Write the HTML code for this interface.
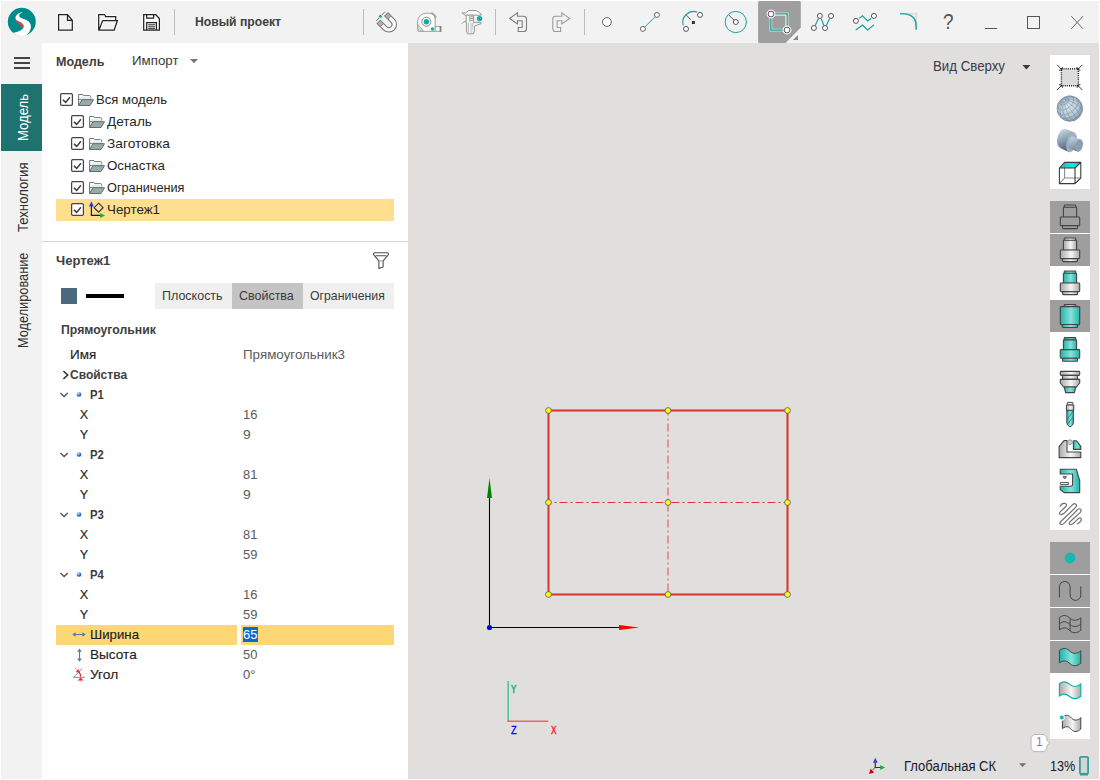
<!DOCTYPE html>
<html lang="ru">
<head>
<meta charset="utf-8">
<title>Новый проект</title>
<style>
html,body{margin:0;padding:0;background:#fff;}
body{width:1100px;height:780px;overflow:hidden;font-family:"Liberation Sans",sans-serif;}
#app{position:relative;width:1100px;height:780px;background:#fff;overflow:hidden;}
#app div{position:absolute;box-sizing:border-box;}
.topbar{left:1px;top:1px;width:1098px;height:42px;background:#f2f2f2;}
.side{left:1px;top:43px;width:41px;height:736px;background:#f2f2f2;}
.panel{left:42px;top:43px;width:366px;height:736px;background:#fff;}
.canvas{left:408px;top:43px;width:691px;height:736px;background:#e0dfdd;}
.sidetab{left:1px;top:84px;width:41px;height:67px;background:#1e7371;}
.sep{width:1px;background:#bdbdbd;top:9px;height:26px;}
.hl{background:#fddf8f;}
.hl2{background:#fdd776;}
.divider{left:42px;top:241px;width:366px;height:1px;background:#d4d4d4;}
.tabs{left:155px;top:283px;width:239px;height:26px;background:#efefef;}
.tabsel{left:232px;top:283px;width:71px;height:26px;background:#c4c4c4;}
.swatch{left:61px;top:288px;width:16px;height:16px;background:#4a697e;}
.lnsample{left:86px;top:294px;width:38px;height:4px;background:#000;}
.selbox{left:243px;top:627px;width:15px;height:15px;background:#0b6bd6;}
.tb{left:1050px;width:40px;background:#fff;}
.tbg{left:1050px;width:40px;height:32px;background:#9e9e9e;}
.ham{left:14px;width:16px;height:2px;background:#444;}
.t{position:absolute;white-space:nowrap;transform-origin:0 0;font-family:"Liberation Sans",sans-serif;}
svg.ov{position:absolute;left:0;top:0;width:1100px;height:780px;overflow:visible;}
.lb{-webkit-text-stroke:0.15px #1e1e1e;}
.st{-webkit-text-stroke:0.3px currentColor;}
#app #labels{left:0;top:0;width:1100px;height:780px;}

</style>
</head>
<body>
<div id="app">
<div class="topbar"></div>
<div class="side"></div>
<div class="panel"></div>
<div class="canvas"></div>
<div class="sidetab"></div>
<div class="ham" style="top:57px"></div>
<div class="ham" style="top:62px"></div>
<div class="ham" style="top:67px"></div>
<div class="sep" style="left:174px"></div>
<div class="sep" style="left:363px"></div>
<div class="sep" style="left:495px"></div>
<div class="sep" style="left:584px"></div>
<div class="hl" style="left:56px;top:199px;width:338px;height:22px"></div>
<div class="divider"></div>
<div class="tabs"></div>
<div class="tabsel"></div>
<div class="swatch"></div>
<div class="lnsample"></div>
<div class="hl2" style="left:56px;top:625px;width:181px;height:20px"></div>
<div class="hl2" style="left:241px;top:625px;width:153px;height:20px"></div>
<div class="selbox"></div>
<div class="tb" style="top:55px;height:134px"></div>
<div class="tb" style="top:201px;height:329px"></div>
<div class="tb" style="top:542px;height:197px"></div>
<div class="tbg" style="top:201px"></div>
<div class="tbg" style="top:234px"></div>
<div class="tbg" style="top:300px"></div>
<div class="tbg" style="top:542px"></div>
<div class="tbg" style="top:575px"></div>
<div class="tbg" style="top:608px"></div>
<div class="tbg" style="top:641px"></div>

<svg class="ov" width="1100" height="780" viewBox="0 0 1100 780">
<defs>
<linearGradient id="gSil" x1="0" y1="0" x2="1" y2="0"><stop offset="0" stop-color="#a9a9a9"/><stop offset="0.55" stop-color="#f6f6f6"/><stop offset="1" stop-color="#a9a9a9"/></linearGradient>
<linearGradient id="gTeal" x1="0" y1="0" x2="1" y2="0"><stop offset="0" stop-color="#22b3aa"/><stop offset="0.55" stop-color="#86e3db"/><stop offset="1" stop-color="#22b3aa"/></linearGradient>
<linearGradient id="gFold" x1="0" y1="0" x2="0" y2="1"><stop offset="0" stop-color="#b9c6c4"/><stop offset="0.35" stop-color="#8fa19e"/><stop offset="1" stop-color="#8a9b98"/></linearGradient>
<radialGradient id="gSph" cx="0.42" cy="0.4" r="0.62"><stop offset="0" stop-color="#dce9f0"/><stop offset="0.65" stop-color="#b6c8d4"/><stop offset="1" stop-color="#8399ab"/></radialGradient>
<linearGradient id="gCyl" x1="0" y1="0" x2="0.35" y2="1"><stop offset="0" stop-color="#e0e8ee"/><stop offset="0.3" stop-color="#aebfcc"/><stop offset="0.75" stop-color="#6d8398"/><stop offset="1" stop-color="#52687e"/></linearGradient>
<radialGradient id="gDot" cx="0.35" cy="0.3" r="0.8"><stop offset="0" stop-color="#cfe6ff"/><stop offset="0.5" stop-color="#3b7fd0"/><stop offset="1" stop-color="#10408c"/></radialGradient>
<linearGradient id="gCyan" x1="0" y1="0" x2="1" y2="0"><stop offset="0" stop-color="#00cfcf"/><stop offset="0.6" stop-color="#00f0ea"/><stop offset="1" stop-color="#00c4c4"/></linearGradient>
<linearGradient id="gCyl2" x1="0" y1="0" x2="0.25" y2="1"><stop offset="0" stop-color="#cdd8e0"/><stop offset="0.5" stop-color="#9fb1bf"/><stop offset="1" stop-color="#71879a"/></linearGradient>
</defs>

<!-- ===== logo ===== -->
<g id="logo">
<clipPath id="cLogo"><circle cx="21.8" cy="21.7" r="14.2"/></clipPath>
<circle cx="21.8" cy="21.7" r="14.2" fill="#fbfbfb"/>
<circle cx="21.8" cy="21.8" r="14" fill="#008b8b"/>
<g clip-path="url(#cLogo)"><g transform="translate(0,-0.6)">
<path d="M23.3,12.7 C20,12.8 16,15 15.5,18.2 C15.3,20.2 16.6,21.2 19.2,22.2 C22.2,23.4 24.2,25.2 23.4,28 C22.6,30.6 18,32.6 13.2,33.4 L15,38 L26,38 L27.3,35 C30,32.4 31.6,28.6 30.6,25.2 C29.6,21.8 26,20.2 22.4,19.1 C19.6,18.2 18.6,16.7 19.5,15.2 C20.3,13.9 21.9,13.2 23.3,12.7 Z" fill="#fff"/>
<path d="M16,20.4 C17.8,22.4 21.4,23.2 23.1,25.3 C24,26.5 23.8,27.6 22.8,28.4 C22.3,26.6 20.2,25.5 18.6,24.6 C17.1,23.8 16.1,22.4 16,20.4 Z" fill="#f0403c"/>
</g></g>
</g>

<!-- ===== top toolbar: file icons ===== -->
<g fill="none" stroke="#fff" stroke-width="2.6" stroke-linejoin="round" opacity="0.9">
<path d="M58.6,14.7 H67.5 L72.3,20.3 V30 H58.6 Z"/>
<path d="M98.7,30 V14.7 H104.6 L105.6,16.6 H115.7 V20.4 M102.7,20.5 H117.4 L114.2,30 H99.4 Z"/>
<path d="M143.7,14.7 H155.8 L159.4,18.5 V30 H143.7 Z"/>
</g>
<g fill="none" stroke="#222" stroke-width="1.25" stroke-linejoin="miter">
<path d="M58.6,14.7 H67.5 L72.3,20.3 V30 H58.6 Z M67.5,14.7 V20.3 H72.3"/>
<path d="M98.7,30 V14.7 H104.6 L105.6,16.6 H115.7 V20.4 M102.7,20.5 H117.4 L114.2,30 H99 L102.7,20.5"/>
<path d="M143.7,14.7 H155.8 L159.4,18.5 V30 H143.7 Z" fill="#fff"/>
<path d="M146.7,14.7 V18.2 H153.6 V14.7 M146.7,30 V22.5 H156.4 V30"/>
<path d="M148.2,24.8 H155 M148.2,26.8 H155 M148.2,28.7 H155" stroke-width="1"/>
</g>

<!-- magnet -->
<g transform="translate(388.9,24.5) rotate(-45)">
<path d="M-7.6,-8.9 H-3.1 V0 A3.1,3.1 0 0 0 3.1,0 V-8.9 H7.6 V0 A7.6,7.6 0 0 1 -7.6,0 Z" fill="#fafafa" stroke="#747474" stroke-width="1"/>
<path d="M-7.6,-8.9 H-3.1 V-4.4 H-7.6 Z M3.1,-8.9 H7.6 V-4.4 H3.1 Z" fill="#b2b2b2" stroke="#747474" stroke-width="0.8"/>
</g>
<path d="M376.2,21 L385,11.6" stroke="#666" stroke-width="0.9" fill="none"/>
<circle cx="380.4" cy="16.4" r="1.9" fill="#12aaa6" stroke="#f2f2f2" stroke-width="0.8"/>

<!-- tape measure -->
<g>
<path d="M430,13.6 L432.6,12.8 L436,16.4 L435.2,18.6 Z" fill="#b4b4b4" stroke="#8e8e8e" stroke-width="0.9"/>
<path d="M419.4,31.4 Q417.6,31.4 417.6,29.6 V21.8 A8.6,8.6 0 0 1 426.2,13.2 H429 Q434.6,13.6 435.2,19 V31.4 Z" fill="#fafafa" stroke="#a2a2a2" stroke-width="1"/>
<path d="M417.9,24.4 L423.4,31 H419.6 Q417.9,31 417.9,29.4 Z" fill="#dedede" stroke="#a2a2a2" stroke-width="0.8"/>
<path d="M435.2,26.6 H440.6 V31.3 H435.2 Z" fill="#fff" stroke="#9a9a9a" stroke-width="1"/>
<path d="M440.5,26 V31.9" stroke="#858585" stroke-width="1.8"/>
<circle cx="426.4" cy="21.7" r="4.5" fill="#fff" stroke="#7c7c7c" stroke-width="0.9"/>
<circle cx="426.4" cy="21.7" r="2.7" fill="#12aaa6"/>
<circle cx="432.4" cy="29" r="1.7" fill="#12aaa6"/>
</g>

<!-- caliper -->
<g fill="#fbfbfb" stroke="#969696" stroke-width="1" stroke-linejoin="round">
<path d="M461.9,12.9 H465.8 L468.6,10.5 H476.3 L481.2,14 V15.2 H465.2 Z"/>
<path d="M466.2,15.2 H473.6 V23 H473 V31 L471.8,33.8 H467.4 L466.6,31 V23 H466.2 Z"/>
<path d="M461.9,23.8 L464,21.7 H466.2" fill="none"/>
<path d="M473.6,22.4 H481 V23.6 L474.4,26.2 V31 L473.4,33.8 H471.8" fill="#f4f4f4"/>
<path d="M468.4,22.6 V32.6 M471,22.6 V32.6" stroke="#b8b8b8" fill="none"/>
<path d="M470,16.9 H473.2 M470,18.6 H473.2 M470,20.3 H473.2" stroke="#8c8c8c" stroke-width="0.9" fill="none"/>
<path d="M469.6,15.6 V22" stroke="#b8b8b8" fill="none"/>
</g>
<circle cx="479.6" cy="18.6" r="2.7" fill="#12aaa6"/>

<!-- undo / redo -->
<path d="M509.6,18.4 L517.5,12.9 V16.2 H523.6 Q526.5,16.2 526.5,19.4 V28.4 Q526.5,31.5 523.6,31.5 H518.2 V27.5 H522.2 V20.8 H517.5 V23.9 Z" fill="none" stroke="#7c7c7c" stroke-width="1.1" stroke-linejoin="miter"/>
<path d="M569.7,18.4 L561.8,12.9 V16.2 H555.7 Q552.8,16.2 552.8,19.4 V28.4 Q552.8,31.5 555.7,31.5 H560.6 V27.5 H557.1 V20.8 H561.8 V23.9 Z" fill="none" stroke="#9c9c9c" stroke-width="1.1" stroke-linejoin="miter"/>

<!-- point -->
<circle cx="606.9" cy="22" r="4.4" fill="#fff" stroke="#666" stroke-width="1"/>
<!-- line -->
<path d="M645,26.8 L654.8,17" stroke="#16a39f" stroke-width="1" fill="none"/>
<circle cx="642.9" cy="28.9" r="2.5" fill="#fff" stroke="#666" stroke-width="1"/>
<circle cx="656.9" cy="14.9" r="2.5" fill="#fff" stroke="#666" stroke-width="1"/>
<!-- arc -->
<path d="M683.2,25.4 A11,11 0 0 1 697.2,12" stroke="#12a19d" stroke-width="1.1" fill="none"/>
<path d="M686.2,15 L690.8,19.6" stroke="#444" stroke-width="0.9" fill="none"/>
<rect x="691.9" y="21" width="3" height="3" fill="#333"/>
<circle cx="686" cy="28.9" r="2.5" fill="#fff" stroke="#555" stroke-width="1"/>
<circle cx="700" cy="14.9" r="2.5" fill="#fff" stroke="#555" stroke-width="1"/>
<!-- circle -->
<circle cx="735.8" cy="22" r="10.6" fill="none" stroke="#16a39f" stroke-width="1"/>
<path d="M728.8,15 L733.8,20" stroke="#444" stroke-width="0.9" fill="none"/>
<circle cx="735.8" cy="22" r="2.5" fill="#fff" stroke="#555" stroke-width="1"/>

<!-- rectangle (selected) -->
<path d="M759.6,1 H799.3 Q800.8,1 800.8,2.5 V27.6 L785.6,43 H759.6 Q758.1,43 758.1,41.5 V2.5 Q758.1,1 759.6,1 Z" fill="#9e9e9e"/>
<path d="M798,35 V40 H793 Z" fill="#8a8a8a"/>
<rect x="770.9" y="13.9" width="16.2" height="16.2" fill="none" stroke="#f4eaea" stroke-width="2.6"/>
<rect x="770.9" y="13.9" width="16.2" height="16.2" fill="none" stroke="#0e9c98" stroke-width="1.3"/>
<path d="M772.2,15.2 H785.8 V28.8" fill="none" stroke="#f6eeee" stroke-width="0.8"/>
<circle cx="771" cy="14" r="3.6" fill="#fff" stroke="#fff" stroke-width="1.6"/>
<circle cx="771" cy="14" r="2.9" fill="#fff" stroke="#555" stroke-width="1"/>
<circle cx="787" cy="30" r="3.6" fill="#fff" stroke="#fff" stroke-width="1.6"/>
<circle cx="787" cy="30" r="2.9" fill="#fff" stroke="#555" stroke-width="1"/>

<!-- polyline -->
<path d="M815.2,25.4 L818.4,18.6 M821.2,18.6 L823.8,25.2 M826.4,25.4 L829.6,18.6" stroke="#12a19d" stroke-width="1.15" fill="none"/>
<g fill="#fff" stroke="#555" stroke-width="1">
<circle cx="813.9" cy="28" r="2.5"/><circle cx="819.9" cy="15.9" r="2.5"/><circle cx="825" cy="28" r="2.5"/><circle cx="831" cy="15.9" r="2.5"/>
</g>
<!-- curves -->
<path d="M859.2,18.4 L862.5,15.7 L867.6,21 L871.2,18.4 M855.8,30 L862.5,25.1 L867.6,29.9 L874,24.9" stroke="#12a19d" stroke-width="1.2" fill="none" stroke-linejoin="miter"/>
<circle cx="855.9" cy="20.9" r="2.5" fill="#fff" stroke="#555" stroke-width="1"/>
<circle cx="873.9" cy="15.9" r="2.5" fill="#fff" stroke="#555" stroke-width="1"/>
<!-- fillet -->
<path d="M905,13.8 H917.4 M916.1,12.4 V25" stroke="#dadada" stroke-width="1.6" fill="none"/>
<path d="M900,13.8 H903.6 Q916.1,14.6 916.1,26 V29.8" stroke="#2aa9a4" stroke-width="1.6" fill="none"/>

<!-- window controls -->
<path d="M985,28.5 H997.2" stroke="#555" stroke-width="1" fill="none"/>
<rect x="1027.5" y="16.5" width="12" height="12" fill="none" stroke="#555" stroke-width="1"/>
<path d="M1071.3,16.2 L1083,28.8 M1083,16.2 L1071.3,28.8" stroke="#666" stroke-width="1" fill="none"/>

<!-- dropdown arrows -->
<path d="M190,59 H198 L194,63.2 Z" fill="#777"/>
<path d="M1022.4,65 H1030.4 L1026.4,69.4 Z" fill="#3a3a3a"/>
<path d="M1019,763.2 H1026.2 L1022.6,766.9 Z" fill="#707070"/>
<!-- ===== tree icons ===== -->
<rect x="60.6" y="93.6" width="11.8" height="11.8" rx="1.3" fill="#fff" stroke="#454545" stroke-width="1.25"/><path d="M63.0,99.9 l2.7,2.5 l4.2,-5.2" fill="none" stroke="#3c3c3c" stroke-width="1.45"/><path d="M78.6,105.6 V94.5 H82.9 L83.5,95.6 H89.6 Q90.7,95.6 90.7,96.8 V99.4 H78.6 Z" fill="#fdfefe" stroke="#6a7a7d" stroke-width="1"/><path d="M80.4,97.2 H90.6 V99.4 H80.4 Z" fill="#e3e9e9"/><path d="M81.9,99.7 H93.5 L90.0,105.5 H78.7 Z" fill="#9aaaa8" stroke="#5f7073" stroke-width="1" stroke-linejoin="round"/>
<rect x="71.6" y="115.6" width="11.8" height="11.8" rx="1.3" fill="#fff" stroke="#454545" stroke-width="1.25"/><path d="M74.0,121.9 l2.7,2.5 l4.2,-5.2" fill="none" stroke="#3c3c3c" stroke-width="1.45"/><path d="M89.6,127.6 V116.5 H93.9 L94.5,117.6 H100.6 Q101.7,117.6 101.7,118.8 V121.4 H89.6 Z" fill="#fdfefe" stroke="#6a7a7d" stroke-width="1"/><path d="M91.4,119.2 H101.6 V121.4 H91.4 Z" fill="#e3e9e9"/><path d="M92.9,121.7 H104.5 L101.0,127.5 H89.7 Z" fill="#9aaaa8" stroke="#5f7073" stroke-width="1" stroke-linejoin="round"/>
<rect x="71.6" y="137.6" width="11.8" height="11.8" rx="1.3" fill="#fff" stroke="#454545" stroke-width="1.25"/><path d="M74.0,143.9 l2.7,2.5 l4.2,-5.2" fill="none" stroke="#3c3c3c" stroke-width="1.45"/><path d="M89.6,149.6 V138.5 H93.9 L94.5,139.6 H100.6 Q101.7,139.6 101.7,140.8 V143.4 H89.6 Z" fill="#fdfefe" stroke="#6a7a7d" stroke-width="1"/><path d="M91.4,141.2 H101.6 V143.4 H91.4 Z" fill="#e3e9e9"/><path d="M92.9,143.7 H104.5 L101.0,149.5 H89.7 Z" fill="#9aaaa8" stroke="#5f7073" stroke-width="1" stroke-linejoin="round"/>
<rect x="71.6" y="159.6" width="11.8" height="11.8" rx="1.3" fill="#fff" stroke="#454545" stroke-width="1.25"/><path d="M74.0,165.9 l2.7,2.5 l4.2,-5.2" fill="none" stroke="#3c3c3c" stroke-width="1.45"/><path d="M89.6,171.6 V160.5 H93.9 L94.5,161.6 H100.6 Q101.7,161.6 101.7,162.8 V165.4 H89.6 Z" fill="#fdfefe" stroke="#6a7a7d" stroke-width="1"/><path d="M91.4,163.2 H101.6 V165.4 H91.4 Z" fill="#e3e9e9"/><path d="M92.9,165.7 H104.5 L101.0,171.5 H89.7 Z" fill="#9aaaa8" stroke="#5f7073" stroke-width="1" stroke-linejoin="round"/>
<rect x="71.6" y="181.6" width="11.8" height="11.8" rx="1.3" fill="#fff" stroke="#454545" stroke-width="1.25"/><path d="M74.0,187.9 l2.7,2.5 l4.2,-5.2" fill="none" stroke="#3c3c3c" stroke-width="1.45"/><path d="M89.6,193.6 V182.5 H93.9 L94.5,183.6 H100.6 Q101.7,183.6 101.7,184.8 V187.4 H89.6 Z" fill="#fdfefe" stroke="#6a7a7d" stroke-width="1"/><path d="M91.4,185.2 H101.6 V187.4 H91.4 Z" fill="#e3e9e9"/><path d="M92.9,187.7 H104.5 L101.0,193.5 H89.7 Z" fill="#9aaaa8" stroke="#5f7073" stroke-width="1" stroke-linejoin="round"/>
<rect x="71.6" y="203.6" width="11.8" height="11.8" rx="1.3" fill="#fff" stroke="#454545" stroke-width="1.25"/><path d="M74.0,209.9 l2.7,2.5 l4.2,-5.2" fill="none" stroke="#3c3c3c" stroke-width="1.45"/>
<path d="M91.4,204.4 V215.4 H100.6" stroke="#1c1c1c" stroke-width="1.2" fill="none"/><path d="M91.4,201.6 l2.5,5 h-5 z" fill="#2a2ff0"/><path d="M105.2,215.4 l-5,2.5 v-5 z" fill="#20b040"/><path d="M98.6,203.2 l4.5,4.5 l-4.5,4.5 l-4.5,-4.5 z" fill="none" stroke="#2c2c40" stroke-width="1.1"/>
<path d="M375,252.7 H387 Q388.7,252.8 388.4,254.3 Q388.2,255 387.4,255.9 L383.1,260.9 V266.9 L378.9,268.6 V260.9 L374.6,255.9 Q373.2,254.3 373.6,253.5 Q374,252.7 375,252.7 Z M375.6,255.7 H386.4" fill="none" stroke="#4e4e4e" stroke-width="1.1" stroke-linejoin="round"/><path d="M378.9,260.9 H383.1" fill="none" stroke="#9a9a9a" stroke-width="1"/>
<path d="M63.4,371 L67.6,375 L63.4,379" fill="none" stroke="#383838" stroke-width="1.7"/>
<path d="M60.4,392.9 l3.7,3.7 l3.7,-3.7" fill="none" stroke="#555" stroke-width="1.4"/>
<circle cx="79" cy="394.5" r="2.35" fill="url(#gDot)"/>
<path d="M60.4,452.9 l3.7,3.7 l3.7,-3.7" fill="none" stroke="#555" stroke-width="1.4"/>
<circle cx="79" cy="454.5" r="2.35" fill="url(#gDot)"/>
<path d="M60.4,512.9 l3.7,3.7 l3.7,-3.7" fill="none" stroke="#555" stroke-width="1.4"/>
<circle cx="79" cy="514.5" r="2.35" fill="url(#gDot)"/>
<path d="M60.4,572.9 l3.7,3.7 l3.7,-3.7" fill="none" stroke="#555" stroke-width="1.4"/>
<circle cx="79" cy="574.5" r="2.35" fill="url(#gDot)"/>
<path d="M74.6,634.5 H83.4" fill="none" stroke="#4a7f94" stroke-width="1.1"/><path d="M72.3,634.5 l3.2,-2.3 v4.6 z M85.7,634.5 l-3.2,-2.3 v4.6 z" fill="#4a7f94"/>
<path d="M79.5,650.8 V659.4" fill="none" stroke="#4a7f94" stroke-width="1.1"/><path d="M79.5,648.5 l-2.3,3.2 h4.6 z M79.5,661.7 l-2.3,-3.2 h4.6 z" fill="#4a7f94"/>
<path d="M73.2,677.3 H84.8 M73.6,677.2 L82,668.8" fill="none" stroke="#6f929e" stroke-width="1"/>
<path d="M75.4,668.4 L77.4,670.2" fill="none" stroke="#f0202c" stroke-width="1" stroke-dasharray="1.2 0.8"/>
<path d="M78.6,671.4 Q80.4,673.6 80.6,676.6" fill="none" stroke="#f0202c" stroke-width="1.1"/>
<path d="M79.4,672.4 l-3,-0.6 l1.8,-2.4 z M80.6,677.8 l2.2,2.6 l-2.2,-0.6 l-2.2,0.6 z M80.6,679 v2.4" fill="#f0202c" stroke="#f0202c" stroke-width="0.6"/>
<!-- ===== canvas drawing ===== -->
<rect x="548.5" y="410.5" width="239" height="184" fill="none" stroke="#dc3a30" stroke-width="2.1"/>
<path d="M548.5,502.5 H787.5" stroke="#e0342c" stroke-width="1" stroke-dasharray="8 3 2 3" stroke-dashoffset="5" fill="none"/>
<path d="M668,410.5 V594.5" stroke="#e0342c" stroke-width="1.1" stroke-dasharray="8 3 2 3" stroke-dashoffset="3" opacity="0.75" fill="none"/>
<circle cx="548.5" cy="410.5" r="2.9" fill="#ffff00" stroke="#3a3a8a" stroke-width="0.7"/>
<circle cx="548.5" cy="502.5" r="2.9" fill="#ffff00" stroke="#3a3a8a" stroke-width="0.7"/>
<circle cx="548.5" cy="594.5" r="2.9" fill="#ffff00" stroke="#3a3a8a" stroke-width="0.7"/>
<circle cx="668.0" cy="410.5" r="2.9" fill="#ffff00" stroke="#3a3a8a" stroke-width="0.7"/>
<circle cx="668.0" cy="502.5" r="2.9" fill="#ffff00" stroke="#3a3a8a" stroke-width="0.7"/>
<circle cx="668.0" cy="594.5" r="2.9" fill="#ffff00" stroke="#3a3a8a" stroke-width="0.7"/>
<circle cx="787.5" cy="410.5" r="2.9" fill="#ffff00" stroke="#3a3a8a" stroke-width="0.7"/>
<circle cx="787.5" cy="502.5" r="2.9" fill="#ffff00" stroke="#3a3a8a" stroke-width="0.7"/>
<circle cx="787.5" cy="594.5" r="2.9" fill="#ffff00" stroke="#3a3a8a" stroke-width="0.7"/>
<path d="M489.5,497 V627.5 H620" stroke="#000" stroke-width="1.1" fill="none"/>
<path d="M489.5,477.8 L492,498 H487 Z" fill="#008000"/>
<path d="M639.2,627.5 L619,630 V625 Z" fill="#ff0000"/>
<circle cx="489.5" cy="627.5" r="2.6" fill="#0000ff"/>
<path d="M508.2,681 V721.4" stroke="#5cc28e" stroke-width="1.6" fill="none"/>
<path d="M507.6,721.2 H548.2" stroke="#ee6464" stroke-width="1.6" fill="none"/>
<path d="M875.3,762 V767.5 H881" stroke="#333" stroke-width="1.2" fill="none"/><path d="M875.3,767.5 L872.8,770" stroke="#333" stroke-width="1.1" stroke-dasharray="1 0.6" fill="none"/><path d="M875.3,757.8 l2.4,5 h-4.8 z" fill="#3a40d8"/><path d="M885.2,767.5 l-5,2.4 v-4.8 z" fill="#1cb040"/><path d="M869,774 l1.6,-5.2 l3.6,3.6 z" fill="#c00010"/>
<rect x="1079.9" y="756.9" width="8.2" height="17" rx="1.2" fill="#cdd8d6" stroke="#3a9c98" stroke-width="1.8"/><path d="M1080,774.2 H1088" stroke="#3a9c98" stroke-width="2.6"/>
<path d="M1034,734.5 H1044 L1046.8,737.3 V740.4 L1049.8,743 L1046.8,745.8 V748.8 L1044,751.6 H1034 L1031.1,748.8 V737.3 Z" fill="#fff" stroke="#b0b0b0" stroke-width="0.9" stroke-linejoin="round"/>
<!-- ===== right toolbar ===== -->
<rect x="1061.4" y="68.8" width="17" height="17" fill="#dcdcdc"/><rect x="1061.4" y="68.8" width="17" height="17" fill="none" stroke="#222" stroke-width="1.5" stroke-dasharray="1 1.12"/><path d="M1057,64.8 L1061.6,69.4 M1082.4,64.8 L1077.8,69.4 M1057,90 L1061.6,85.4 M1082.4,90 L1077.8,85.4" stroke="#222" stroke-width="0.9" fill="none"/><path d="M1062.4,67 L1061.8,69.8 L1059,70.2 M1077,67 L1077.6,69.8 L1080.4,70.2 M1062.4,87.8 L1061.8,85 L1059,84.6 M1077,87.8 L1077.6,85 L1080.4,84.6" stroke="#222" stroke-width="0.9" fill="none"/>
<circle cx="1069.8" cy="108.6" r="12.7" fill="url(#gSph)" stroke="#8096a8" stroke-width="0.7"/>
<path d="M1060.5,104.0 L1060.3,103.8 L1060.2,103.5 L1060.1,103.1 L1060.1,102.8 L1060.1,102.4 L1060.2,102.0 L1060.3,101.7 L1060.5,101.3 L1060.7,100.9 L1060.9,100.5 L1061.2,100.1 L1061.5,99.7 L1061.9,99.4 L1062.2,99.0 L1062.6,98.7 L1063.1,98.4 L1063.5,98.2 L1063.9,98.0 L1064.4,97.8 L1064.9,97.6 L1065.3,97.5 L1065.7,97.5 L1066.2,97.4 L1066.6,97.4 L1066.9,97.5 L1067.3,97.6 L1067.6,97.7 L1067.9,97.9 L1068.2,98.1 L1068.4,98.3 L1068.5,98.6 L1068.6,98.9 L1068.7,99.2 L1068.7,99.6 L1068.7,99.9 L1068.7,100.3 L1068.5,100.7 L1068.4,101.1 L1068.2,101.5 L1067.9,101.9 L1067.7,102.3 L1067.3,102.6 L1067.0,103.0 L1066.6,103.3 L1066.2,103.7 L1065.8,103.9 L1065.4,104.2 L1064.9,104.4 L1064.5,104.6 L1064.0,104.7 L1063.6,104.9 L1063.1,104.9 L1062.7,105.0 L1062.3,104.9 L1061.9,104.9 L1061.6,104.8 L1061.2,104.7 L1061.0,104.5 L1060.7,104.3 L1060.5,104.0 M1058.4,108.2 L1058.1,107.7 L1057.9,107.1 L1057.8,106.5 L1057.7,105.9 L1057.7,105.2 L1057.9,104.5 L1058.1,103.8 L1058.4,103.1 M1068.1,96.0 L1068.9,96.0 L1069.6,96.0 L1070.3,96.1 L1071.0,96.3 L1071.6,96.5 L1072.1,96.8 L1072.6,97.2 L1073.0,97.7 L1073.3,98.2 L1073.5,98.7 L1073.6,99.3 L1073.7,100.0 L1073.6,100.6 L1073.5,101.3 L1073.3,102.1 L1073.0,102.8 L1072.6,103.5 L1072.2,104.2 L1071.7,104.9 L1071.1,105.6 L1070.4,106.3 L1069.7,106.9 L1069.0,107.5 L1068.2,108.0 L1067.4,108.5 L1066.6,108.9 L1065.7,109.2 L1064.9,109.5 L1064.1,109.7 L1063.3,109.8 L1062.5,109.9 L1061.7,109.9 L1061.0,109.8 L1060.4,109.6 L1059.8,109.3 L1059.3,109.0 L1058.8,108.6 L1058.4,108.2 M1058.1,112.4 L1057.7,111.8 L1057.4,111.0 M1076.0,97.6 L1076.6,98.1 L1077.1,98.6 L1077.5,99.3 L1077.8,100.0 L1077.9,100.8 L1078.0,101.7 L1078.0,102.5 L1077.8,103.5 L1077.5,104.4 L1077.1,105.3 L1076.6,106.3 L1076.1,107.2 L1075.4,108.2 L1074.6,109.1 L1073.8,109.9 L1072.9,110.7 L1071.9,111.5 L1070.9,112.2 L1069.8,112.8 L1068.7,113.3 L1067.6,113.8 L1066.6,114.1 L1065.5,114.4 L1064.4,114.6 L1063.4,114.6 L1062.4,114.6 L1061.5,114.5 L1060.6,114.2 L1059.9,113.9 L1059.2,113.5 L1058.6,113.0 L1058.1,112.4 M1080.5,101.9 L1080.8,102.6 L1081.0,103.5 L1081.1,104.4 L1081.0,105.4 L1080.9,106.4 L1080.6,107.4 L1080.1,108.4 L1079.6,109.4 L1079.0,110.4 L1078.2,111.4 L1077.4,112.4 L1076.5,113.3 L1075.5,114.2 L1074.5,115.0 L1073.4,115.8 L1072.2,116.4 L1071.1,117.0 L1069.9,117.5 L1068.7,117.9 L1067.5,118.2 L1066.4,118.4 L1065.3,118.4 L1064.2,118.4 L1063.2,118.3 L1062.3,118.0 L1061.5,117.7 L1060.7,117.2 L1060.1,116.7 M1082.5,107.8 L1082.4,108.7 L1082.2,109.6 L1082.0,110.5 L1081.6,111.5 L1081.1,112.4 L1080.5,113.4 L1079.8,114.3 L1079.1,115.2 L1078.2,116.1 L1077.3,116.9 L1076.3,117.6 L1075.3,118.3 L1074.3,118.9 L1073.2,119.5 L1072.1,119.9 L1071.0,120.3 L1069.9,120.5 L1068.9,120.7 L1067.8,120.8 L1066.9,120.7 L1066.0,120.6 L1065.1,120.4 M1080.4,115.6 L1079.9,116.3 L1079.3,117.0 L1078.6,117.6 L1077.9,118.2 L1077.2,118.8 L1076.4,119.3 L1075.6,119.8 L1074.8,120.2 L1074.0,120.6 L1073.1,120.8 M1062.9,101.4 L1062.1,102.1 L1061.4,102.9 L1060.7,103.8 L1060.1,104.7 L1059.5,105.6 L1059.1,106.5 L1058.7,107.4 L1058.4,108.4 L1058.1,109.3 L1058.0,110.3 L1058.0,111.2 L1058.0,112.1 L1058.2,113.0 L1058.4,113.9 L1058.7,114.7 L1059.1,115.5 M1062.8,101.1 L1061.9,101.6 L1061.1,102.1 L1060.3,102.7 L1059.6,103.3 L1059.0,104.0 L1058.5,104.7 L1058.0,105.4 L1057.6,106.2 L1057.4,107.0 L1057.2,107.8 L1057.1,108.6 M1062.9,100.7 L1062.1,100.9 L1061.3,101.1 L1060.6,101.4 L1059.9,101.7 L1059.4,102.1 L1058.9,102.5 L1058.5,103.0 L1058.2,103.5 M1063.2,100.3 L1062.5,100.1 L1061.9,100.0 L1061.4,100.0 L1061.0,100.0 L1060.6,100.1 L1060.3,100.3 M1063.5,99.9 L1063.2,99.5 L1062.9,99.1 L1062.7,98.8 L1062.5,98.6 L1062.4,98.4 L1062.4,98.3 M1064.0,99.7 L1064.0,99.0 L1064.1,98.5 L1064.2,98.0 L1064.4,97.5 L1064.6,97.2 L1064.9,96.9 M1064.4,99.6 L1064.9,98.9 L1065.3,98.2 L1065.8,97.6 L1066.3,97.1 L1066.9,96.7 L1067.4,96.3 L1068.0,96.1 L1068.6,96.0 M1064.8,99.6 L1065.6,98.9 L1066.3,98.3 L1067.1,97.8 L1068.0,97.3 L1068.8,96.9 L1069.6,96.6 L1070.5,96.4 L1071.3,96.3 L1072.1,96.3 L1072.9,96.4 L1073.7,96.5 M1065.1,99.8 L1066.1,99.3 L1067.0,98.8 L1068.1,98.4 L1069.1,98.1 L1070.1,97.9 L1071.1,97.7 L1072.2,97.7 L1073.2,97.7 L1074.1,97.8 L1075.1,97.9 L1076.0,98.2 L1076.8,98.5 L1077.6,98.9 L1078.4,99.4 L1079.0,100.0 L1079.7,100.6 M1065.2,100.2 L1066.2,99.9 L1067.3,99.7 L1068.4,99.5 L1069.5,99.5 L1070.6,99.4 L1071.7,99.5 L1072.8,99.6 L1073.9,99.8 L1074.9,100.1 L1075.9,100.4 L1076.9,100.8 L1077.7,101.3 L1078.6,101.8 L1079.3,102.4 L1080.0,103.0 L1080.7,103.6 L1081.2,104.3 L1081.6,105.0 L1082.0,105.8 L1082.3,106.6 L1082.4,107.3 M1065.1,100.5 L1066.1,100.6 L1067.1,100.7 L1068.2,100.9 L1069.2,101.1 L1070.3,101.4 L1071.3,101.7 L1072.3,102.1 L1073.4,102.5 L1074.4,103.0 L1075.3,103.5 L1076.2,104.1 L1077.1,104.7 L1077.9,105.3 L1078.6,106.0 L1079.3,106.6 L1079.9,107.3 L1080.5,108.0 L1080.9,108.7 L1081.3,109.4 L1081.6,110.1 L1081.8,110.8 L1081.8,111.5 L1081.9,112.1 L1081.8,112.7 M1064.9,100.9 L1065.7,101.3 L1066.5,101.7 L1067.3,102.2 L1068.2,102.7 L1069.1,103.3 L1069.9,103.9 L1070.8,104.6 L1071.7,105.3 L1072.5,106.0 L1073.4,106.7 L1074.2,107.4 L1075.0,108.2 L1075.7,108.9 L1076.4,109.7 L1077.0,110.4 L1077.6,111.1 L1078.1,111.8 L1078.6,112.5 L1079.0,113.2 L1079.3,113.8 L1079.6,114.4 L1079.8,114.9 L1079.9,115.4 L1079.9,115.8 L1079.8,116.2 L1079.7,116.5 M1064.5,101.3 L1065.0,102.0 L1065.5,102.7 L1066.0,103.4 L1066.6,104.2 L1067.2,105.0 L1067.8,105.9 L1068.5,106.8 L1069.1,107.7 L1069.8,108.6 L1070.4,109.4 L1071.1,110.3 L1071.7,111.2 L1072.3,112.1 L1072.9,112.9 L1073.5,113.7 L1074.0,114.5 L1074.6,115.2 L1075.0,115.8 L1075.5,116.4 L1075.9,117.0 L1076.2,117.5 L1076.5,117.9 L1076.8,118.2 L1077.0,118.5 L1077.1,118.7 L1077.2,118.8 M1064.1,101.5 L1064.2,102.4 L1064.3,103.3 L1064.5,104.3 L1064.7,105.2 L1065.0,106.3 L1065.3,107.3 L1065.7,108.3 L1066.0,109.4 L1066.4,110.4 L1066.9,111.4 L1067.3,112.4 L1067.8,113.4 L1068.3,114.3 L1068.8,115.2 L1069.3,116.0 L1069.8,116.8 L1070.3,117.5 L1070.8,118.2 L1071.3,118.8 L1071.8,119.3 L1072.2,119.7 L1072.7,120.0 L1073.1,120.3 L1073.5,120.4 L1073.9,120.5 L1074.2,120.5 M1063.6,101.6 L1063.3,102.6 L1063.1,103.6 L1062.9,104.6 L1062.8,105.7 L1062.8,106.8 L1062.8,107.9 L1062.8,109.0 L1062.9,110.1 L1063.1,111.2 L1063.3,112.3 L1063.5,113.3 L1063.8,114.3 L1064.1,115.3 L1064.5,116.2 L1065.0,117.0 L1065.4,117.8 L1065.9,118.6 L1066.5,119.2 L1067.0,119.8 L1067.6,120.3 L1068.2,120.6 L1068.8,120.9 L1069.4,121.1 L1070.0,121.3 M1063.2,101.6 L1062.6,102.5 L1062.1,103.5 L1061.6,104.5 L1061.2,105.5 L1060.8,106.5 L1060.6,107.6 L1060.4,108.7 L1060.2,109.8 L1060.1,110.8 L1060.2,111.9 L1060.2,112.9 L1060.4,113.9 L1060.6,114.8 L1060.9,115.7 L1061.3,116.6 L1061.7,117.4 L1062.2,118.1 L1062.7,118.7 L1063.3,119.3 L1064.0,119.8 L1064.7,120.2 " fill="none" stroke="#6b8498" stroke-width="0.65" opacity="0.8"/>
<g stroke="none"><path d="M1063.4,129 Q1065.4,128.4 1067.4,129.4 L1074.4,132.6 L1069.4,152.2 L1061,148.6 Q1056.2,145.6 1057.2,138.4 Q1058.6,131 1063.4,129 Z" fill="url(#gCyl)"/><ellipse cx="1071.6" cy="142.3" rx="5" ry="10.2" transform="rotate(14 1071.6 142.3)" fill="#a0b2c1"/><path d="M1071.2,136.4 L1080.4,139.2 L1078,151.8 L1068.8,148.6 Q1067.4,142 1071.2,136.4 Z" fill="url(#gCyl2)"/><ellipse cx="1079.2" cy="145.5" rx="3.6" ry="6.3" transform="rotate(14 1079.2 145.5)" fill="#8a9eb0"/></g>
<path d="M1064.6,162.4 H1080.8 L1075,168 H1059.4 Z" fill="url(#gCyan)"/><path d="M1064.6,162.4 V178 H1080.8 M1064.6,178 L1059.4,183.6" fill="none" stroke="#8a8a8a" stroke-width="1.1"/><path d="M1059.4,168 H1075 V183.6 H1059.4 Z M1059.4,168 L1064.6,162.4 H1080.8 V178 L1075,183.6 M1075,168 L1080.8,162.4" fill="none" stroke="#3c3c3c" stroke-width="1.1" stroke-linejoin="round"/>
<g stroke="#444" stroke-width="1.1" stroke-linejoin="round"><rect x="1064.2" y="205.0" width="11.6" height="2.6" rx="0.8" fill="#9e9e9e"/><rect x="1063.4" y="207.3" width="13.2" height="10" rx="0.8" fill="#9e9e9e"/><rect x="1060.3" y="217.0" width="19.4" height="8.6" rx="0.8" fill="#9e9e9e"/><rect x="1062.5" y="225.6" width="15" height="3" rx="0.8" fill="#9e9e9e"/></g>
<g stroke="#444" stroke-width="1.1" stroke-linejoin="round"><rect x="1064.2" y="238.0" width="11.6" height="2.6" rx="0.8" fill="url(#gSil)"/><rect x="1063.4" y="240.3" width="13.2" height="10" rx="0.8" fill="url(#gSil)"/><rect x="1060.3" y="250.0" width="19.4" height="8.6" rx="0.8" fill="url(#gSil)"/><rect x="1062.5" y="258.6" width="15" height="3" rx="0.8" fill="url(#gSil)"/></g>
<g stroke="#444" stroke-width="1.1" stroke-linejoin="round"><rect x="1064.2" y="271.0" width="11.6" height="2.6" rx="0.8" fill="url(#gTeal)"/><rect x="1063.4" y="273.3" width="13.2" height="10" rx="0.8" fill="url(#gTeal)"/><rect x="1060.3" y="283.0" width="19.4" height="8.6" rx="0.8" fill="url(#gSil)"/><rect x="1062.5" y="291.6" width="15" height="3" rx="0.8" fill="url(#gSil)"/></g>
<g stroke="#444" stroke-width="1.1" stroke-linejoin="round"><rect x="1064.2" y="304.5" width="11.6" height="2.4" rx="0.8" fill="url(#gTeal)"/><rect x="1060.3" y="306.6" width="19.4" height="18" rx="0.8" fill="url(#gTeal)"/><rect x="1062.5" y="324.5" width="15" height="3" rx="0.8" fill="url(#gTeal)"/></g>
<g stroke="#444" stroke-width="1.1" stroke-linejoin="round"><rect x="1064.2" y="337.6" width="11.6" height="2.6" rx="0.8" fill="url(#gTeal)"/><rect x="1063.4" y="339.9" width="13.2" height="10" rx="0.8" fill="url(#gTeal)"/><rect x="1060.3" y="349.6" width="19.4" height="8.6" rx="0.8" fill="url(#gTeal)"/><rect x="1062.5" y="358.2" width="15" height="3" rx="0.8" fill="url(#gTeal)"/></g>
<g stroke="#444" stroke-width="1.1" stroke-linejoin="round"><rect x="1060.3" y="371.4" width="19.4" height="4" rx="0.8" fill="url(#gSil)"/><rect x="1062.5" y="375.4" width="15" height="4" fill="url(#gSil)"/><path d="M1060.3,379.4 H1079.7 V383 L1076.4,387 H1063.6 L1060.3,383 Z" fill="url(#gSil)"/><path d="M1064.2,387 H1075.8 L1074.4,392.6 H1065.6 Z" fill="url(#gTeal)"/></g>
<g stroke="#444" stroke-width="1" stroke-linejoin="round"><rect x="1067.3" y="402.4" width="5.6" height="2.6" rx="0.6" fill="#f4f4f4"/><path d="M1066.4,405 H1073.8 V410.4 H1066.4 Z" fill="url(#gSil)"/><path d="M1066.8,410.4 H1073.4 V420 Q1073.8,423 1072.6,425 L1070.1,427 L1067.6,425 Q1066.4,423 1066.8,420 Z" fill="url(#gTeal)"/><path d="M1073.2,411 L1067,419.6 M1073.4,416.4 L1067.4,424.4 M1067,412.6 L1068.6,410.6" fill="none" stroke="#2a7e7a" stroke-width="0.9"/></g>
<g stroke="#444" stroke-width="1.1" stroke-linejoin="round"><path d="M1064,440.6 H1067 V452 H1080.8 V457.6 H1059.1 V446.6 Z" fill="url(#gSil)"/><path d="M1073.4,440.8 H1076.4 L1080.8,446.4 V449.4 H1073.4 Z" fill="url(#gTeal)"/><circle cx="1070" cy="442.2" r="2.4" fill="#cfcfcf" stroke="#8a8a8a" stroke-width="0.8"/></g>
<g stroke="#444" stroke-width="1.1" stroke-linejoin="round"><path d="M1060.2,469.3 H1076.4 L1079.7,480.6 V492.6 H1064 L1060.2,489.6 V486.2 H1071.6 L1072.6,485 V474 H1060.2 Z" fill="url(#gTeal)"/><rect x="1060.4" y="482.6" width="8" height="2" fill="#fff" stroke-width="0.9"/><path d="M1063.2,476.4 H1066.4 L1065.6,478.4 H1064 Z" fill="#aaa" stroke-width="0.8"/></g>
<path d="M1060.2,506.4 C1061,504.4 1063,503 1064.8,503.4 C1066.8,503.9 1067,505.4 1065.6,506.8 L1060.4,511.6 C1059,513 1059.5,514.2 1060.8,514.5 C1062,514.8 1063,514.2 1064,513.3 L1072.6,504.6 C1073.8,503.4 1075,503.4 1075.9,504.2 C1076.9,505.2 1076.4,506.6 1075.4,507.6 L1060.6,521.8 C1059.4,523 1059.7,524 1060.8,524.4 C1062,524.8 1063,524.2 1064,523.4 L1077.6,509.6 C1078.8,508.4 1079.9,508.6 1080.7,509.4 C1081.5,510.4 1081,511.6 1080,512.6 L1069.8,522 C1068.6,523.2 1068.9,524 1070,524.4 C1071.2,524.8 1072.4,524.2 1073.4,523.4 L1078.4,518.6 C1079.6,517.4 1080.5,517.6 1081.1,518.6 C1081.8,520.2 1080,522.8 1077.4,523.8" fill="none" stroke="#707070" stroke-width="1.2" stroke-linecap="round"/>
<circle cx="1070" cy="558" r="5.4" fill="#1ab6ae"/>
<path d="M1059.4,597.4 V586.8 A5.35,5.35 0 0 1 1070.1,586.8 V595 A5.35,5.35 0 0 0 1080.8,595 V586.4" fill="none" stroke="#444" stroke-width="1"/>
<path d="M1059.4,617.5 C1064.1,614.0 1067.1,615.6 1070.1,618.4 S1077.6,620.8 1080.8,617.8L1080.8,630.2 C1077.6,633.2 1073.1,633.6 1070.1,630.8 S1064.1,626.4 1059.4,629.9 Z" fill="none" stroke="#444" stroke-width="1"/>
<path d="M1059.4,623.7 C1064.1,620.2 1067.1,621.8 1070.1,624.6 S1077.6,627.0 1080.8,624.0 M1070.1,618.4 V630.8" fill="none" stroke="#444" stroke-width="1"/>
<path d="M1059.4,650.5 C1064.1,647.0 1067.1,648.6 1070.1,651.4 S1077.6,653.8 1080.8,650.8L1080.8,663.2 C1077.6,666.2 1073.1,666.6 1070.1,663.8 S1064.1,659.4 1059.4,662.9 Z" fill="url(#gTeal)" stroke="#444" stroke-width="1"/>
<path d="M1059.4,683.7 C1064.1,680.2 1067.1,681.8 1070.1,684.6 S1077.6,687.0 1080.8,684.0L1080.8,696.2 C1077.6,699.2 1073.1,699.6 1070.1,696.8 S1064.1,692.4 1059.4,695.9 Z" fill="url(#gSil)" stroke="#12b0aa" stroke-width="1.2"/>
<path d="M1062.4,717.3 C1066.4,713.8 1069.0,715.4 1071.6,718.2 S1078.0,720.6 1080.8,717.6L1080.8,729.0 C1078.0,732.0 1074.2,732.4 1071.6,729.6 S1066.4,725.2 1062.4,728.7 Z" fill="url(#gSil)" stroke="#444" stroke-width="1"/>
<circle cx="1061.8" cy="717.6" r="3.1" fill="#fff"/><circle cx="1061.8" cy="717.6" r="2" fill="#1ab6ae"/>
</svg>
<div id="labels">
<span class="t" style="font-size:12.7px;line-height:18px;color:#404040;font-weight:bold;left:195.00px;top:13px;transform:scaleX(0.9592);">Новый проект</span>
<span class="t" style="font-size:12.7px;line-height:18px;color:#404040;font-weight:bold;left:56.00px;top:53px;transform:scaleX(0.9873);">Модель</span>
<span class="t" style="font-size:12.7px;line-height:18px;color:#3a3a3a;left:132.00px;top:52px;transform:scaleX(1.0483);">Импорт</span>
<span class="t" style="font-size:12.7px;line-height:18px;color:#262626;left:96.00px;top:91px;transform:scaleX(1.0325);">Вся модель</span>
<span class="t" style="font-size:12.7px;line-height:18px;color:#262626;left:106.80px;top:113px;transform:scaleX(1.0698);">Деталь</span>
<span class="t" style="font-size:12.7px;line-height:18px;color:#262626;left:107.00px;top:135px;transform:scaleX(1.0824);">Заготовка</span>
<span class="t" style="font-size:12.7px;line-height:18px;color:#262626;left:107.00px;top:157px;transform:scaleX(1.0483);">Оснастка</span>
<span class="t" style="font-size:12.7px;line-height:18px;color:#262626;left:107.00px;top:179px;transform:scaleX(1.0020);">Ограничения</span>
<span class="t" style="font-size:12.7px;line-height:18px;color:#262626;left:107.00px;top:201px;transform:scaleX(1.0511);">Чертеж1</span>
<span class="t" style="font-size:12.7px;line-height:18px;color:#404040;font-weight:bold;left:56.30px;top:252px;transform:scaleX(1.0281);">Чертеж1</span>
<span class="t" style="font-size:12.7px;line-height:18px;color:#3a3a3a;left:162.10px;top:287px;transform:scaleX(0.9839);">Плоскость</span>
<span class="t" style="font-size:12.7px;line-height:18px;color:#3a3a3a;left:238.70px;top:287px;transform:scaleX(0.9835);">Свойства</span>
<span class="t" style="font-size:12.7px;line-height:18px;color:#3a3a3a;left:310.10px;top:287px;transform:scaleX(0.9671);">Ограничения</span>
<span class="t" style="font-size:12.7px;line-height:18px;color:#404040;font-weight:bold;left:60.80px;top:321px;transform:scaleX(0.9665);">Прямоугольник</span>
<span class="t lb" style="font-size:12.7px;line-height:18px;color:#1e1e1e;left:70.00px;top:346px;transform:scaleX(1.0599);">Имя</span>
<span class="t" style="font-size:12.7px;line-height:18px;color:#5a5a5a;left:242.70px;top:346px;transform:scaleX(1.0544);">Прямоугольник3</span>
<span class="t" style="font-size:12.7px;line-height:18px;color:#404040;font-weight:bold;left:70.00px;top:366px;transform:scaleX(0.9467);">Свойства</span>
<span class="t" style="font-size:12.7px;line-height:18px;color:#3c3c3c;font-weight:bold;left:90.10px;top:386px;transform:scaleX(0.8885);">P1</span>
<span class="t lb" style="font-size:12.7px;line-height:18px;color:#1e1e1e;left:79.80px;top:406px;transform:scaleX(1.0000);">X</span>
<span class="t lb" style="font-size:12.7px;line-height:18px;color:#1e1e1e;left:79.80px;top:426px;transform:scaleX(1.0000);">Y</span>
<span class="t" style="font-size:12.7px;line-height:18px;color:#5a5a5a;left:242.80px;top:406px;transform:scaleX(1.0195);">16</span>
<span class="t" style="font-size:12.7px;line-height:18px;color:#5a5a5a;left:242.80px;top:426px;transform:scaleX(1.0903);">9</span>
<span class="t" style="font-size:12.7px;line-height:18px;color:#3c3c3c;font-weight:bold;left:90.10px;top:446px;transform:scaleX(0.8885);">P2</span>
<span class="t lb" style="font-size:12.7px;line-height:18px;color:#1e1e1e;left:79.80px;top:466px;transform:scaleX(1.0000);">X</span>
<span class="t lb" style="font-size:12.7px;line-height:18px;color:#1e1e1e;left:79.80px;top:486px;transform:scaleX(1.0000);">Y</span>
<span class="t" style="font-size:12.7px;line-height:18px;color:#5a5a5a;left:242.80px;top:466px;transform:scaleX(1.0195);">81</span>
<span class="t" style="font-size:12.7px;line-height:18px;color:#5a5a5a;left:242.80px;top:486px;transform:scaleX(1.0903);">9</span>
<span class="t" style="font-size:12.7px;line-height:18px;color:#3c3c3c;font-weight:bold;left:90.10px;top:506px;transform:scaleX(0.8885);">P3</span>
<span class="t lb" style="font-size:12.7px;line-height:18px;color:#1e1e1e;left:79.80px;top:526px;transform:scaleX(1.0000);">X</span>
<span class="t lb" style="font-size:12.7px;line-height:18px;color:#1e1e1e;left:79.80px;top:546px;transform:scaleX(1.0000);">Y</span>
<span class="t" style="font-size:12.7px;line-height:18px;color:#5a5a5a;left:242.80px;top:526px;transform:scaleX(1.0195);">81</span>
<span class="t" style="font-size:12.7px;line-height:18px;color:#5a5a5a;left:242.80px;top:546px;transform:scaleX(1.0195);">59</span>
<span class="t" style="font-size:12.7px;line-height:18px;color:#3c3c3c;font-weight:bold;left:90.10px;top:566px;transform:scaleX(0.8885);">P4</span>
<span class="t lb" style="font-size:12.7px;line-height:18px;color:#1e1e1e;left:79.80px;top:586px;transform:scaleX(1.0000);">X</span>
<span class="t lb" style="font-size:12.7px;line-height:18px;color:#1e1e1e;left:79.80px;top:606px;transform:scaleX(1.0000);">Y</span>
<span class="t" style="font-size:12.7px;line-height:18px;color:#5a5a5a;left:242.80px;top:586px;transform:scaleX(1.0195);">16</span>
<span class="t" style="font-size:12.7px;line-height:18px;color:#5a5a5a;left:242.80px;top:606px;transform:scaleX(1.0195);">59</span>
<span class="t lb" style="font-size:12.7px;line-height:18px;color:#1e1e1e;left:89.80px;top:626px;transform:scaleX(1.0443);">Ширина</span>
<span class="t lb" style="font-size:12.7px;line-height:18px;color:#1e1e1e;left:89.80px;top:646px;transform:scaleX(1.0716);">Высота</span>
<span class="t lb" style="font-size:12.7px;line-height:18px;color:#1e1e1e;left:89.80px;top:666px;transform:scaleX(1.0833);">Угол</span>
<span class="t" style="font-size:12.7px;line-height:18px;color:#ffffff;left:242.90px;top:626px;transform:scaleX(1.0195);">65</span>
<span class="t" style="font-size:12.7px;line-height:18px;color:#5a5a5a;left:242.80px;top:646px;transform:scaleX(1.0195);">50</span>
<span class="t" style="font-size:12.7px;line-height:18px;color:#5a5a5a;left:242.80px;top:666px;transform:scaleX(1.0296);">0°</span>
<span class="t" style="font-size:13.8px;line-height:20px;color:#3a3a4a;left:932.70px;top:57px;transform:scaleX(0.9610);">Вид Сверху</span>
<span class="t" style="font-size:13.8px;line-height:20px;color:#1a1a2a;left:903.50px;top:757px;transform:scaleX(0.9419);">Глобальная СК</span>
<span class="t" style="font-size:13.8px;line-height:20px;color:#1a1a2a;left:1049.50px;top:757px;transform:scaleX(0.9158);">13%</span>
<span class="t" style="font-size:13.4px;line-height:19px;color:#8e78b6;left:1036.10px;top:732px;transform:scaleX(0.9000);">1</span>
<span class="t" style="font-size:22.5px;line-height:33px;color:#555555;left:943.30px;top:5px;transform:scaleX(0.8400);">?</span>
<span class="t st" style="font-size:10px;line-height:14px;color:#00a84c;left:511.30px;top:683px;transform:scaleX(0.8000);">Y</span>
<span class="t st" style="font-size:11px;line-height:16px;color:#0000ff;left:511.10px;top:722px;transform:scaleX(0.8500);">Z</span>
<span class="t st" style="font-size:11px;line-height:16px;color:#ff0000;left:551.30px;top:722px;transform:scaleX(0.7500);">X</span>
<span class="t" style="font-size:13.8px;line-height:20px;color:#ffffff;left:13.5px;top:141.00px;transform:rotate(-90deg) scaleX(0.9489);">Модель</span>
<span class="t" style="font-size:13.8px;line-height:20px;color:#2e2e2e;left:13.5px;top:231.50px;transform:rotate(-90deg) scaleX(0.9521);">Технология</span>
<span class="t" style="font-size:13.8px;line-height:20px;color:#2e2e2e;left:13.5px;top:347.50px;transform:rotate(-90deg) scaleX(0.9241);">Моделирование</span>
</div>
</div>
</body>
</html>
